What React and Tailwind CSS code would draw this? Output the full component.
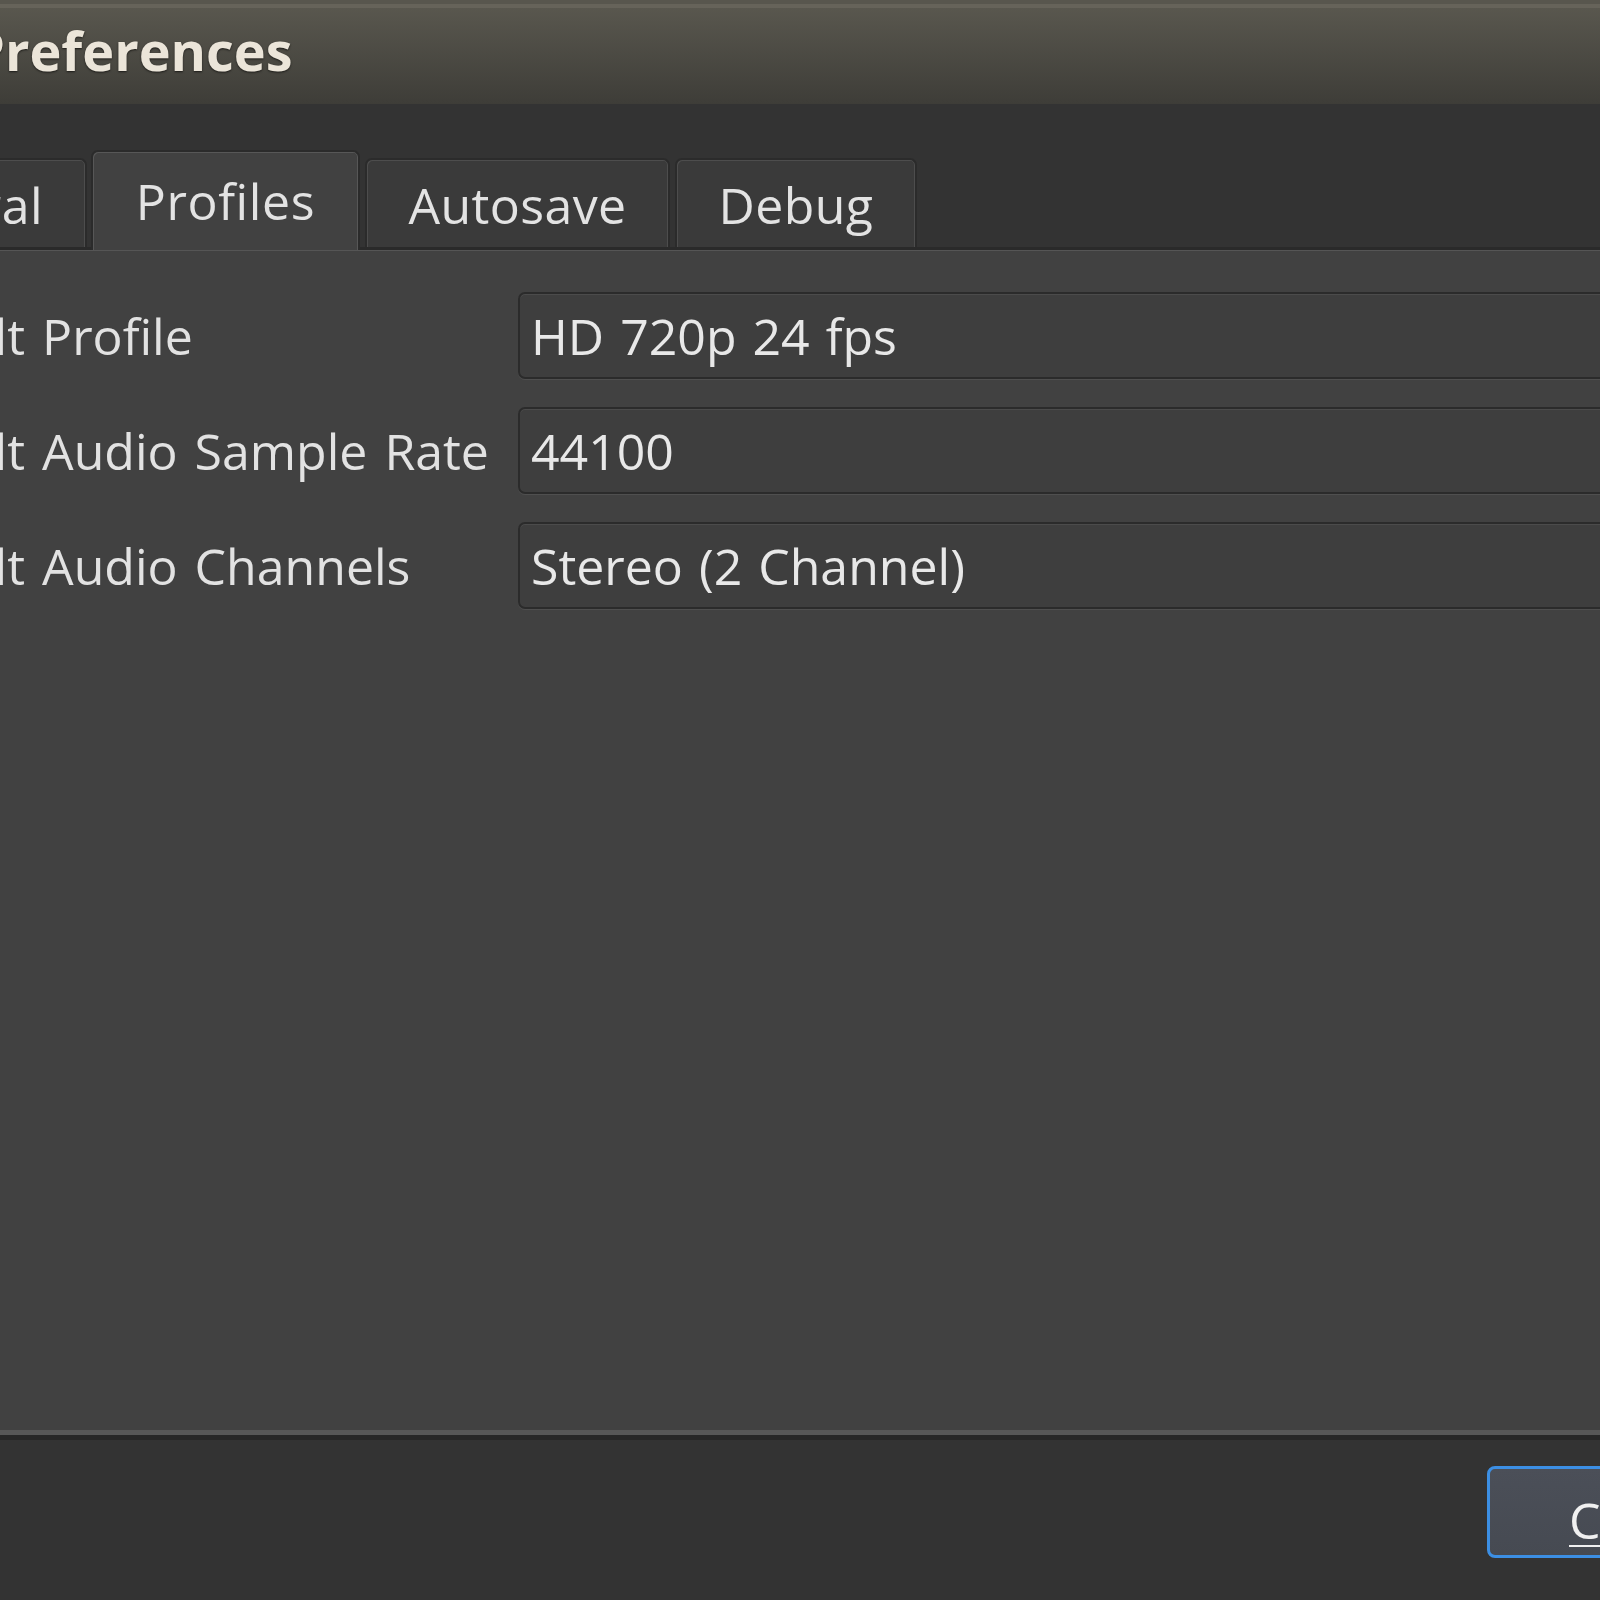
import React from "react";

const tabs = [
  { label: "General", w: "w-[275px]" },
  { label: "Profiles", w: "w-[269px]", active: true },
  { label: "Autosave", w: "w-[305px]" },
  { label: "Debug", w: "w-[242px]" },
];

const rows = [
  { label: "Default Profile", value: "HD 720p 24 fps" },
  { label: "Default Audio Sample Rate", value: "44100" },
  { label: "Default Audio Channels", value: "Stereo (2 Channel)" },
];

const App = () => {
  return (
    <div className="w-[1600px] h-[1600px] overflow-hidden bg-[#333333] font-['Open_Sans',sans-serif] text-[50px] leading-[60px] text-[#e3e3e3]">
      {/* dialog, shifted so its left part is off screen */}
      <div className="ml-[-190px] w-[2100px] flex flex-col">
        {/* Title bar */}
        <div className="h-[104px] bg-[linear-gradient(to_bottom,#5b5950,#3e3d38)] shadow-[inset_0_4px_0_#58564e,inset_0_8px_0_#66635a] pt-[20px] pl-[161px]">
          <span className="font-bold text-[54px] text-[#ebe5d9] [text-shadow:0_1px_2px_#1c1b18]">
            Preferences
          </span>
        </div>

        {/* Tabs */}
        <div className="mt-[46px] pl-[2px] flex items-end gap-[4px]">
          {tabs.map((t, i) =>
            t.active ? (
              <div
                key={t.label}
                className={`${t.w} relative z-10 h-[100px] mb-[-3px] bg-[#414141] border-2 border-b-0 border-[#2b2b2b] rounded-t-[7px] shadow-[inset_1px_1px_0_#575757,inset_-1px_0_0_#575757] flex justify-center pt-[19px] tracking-[0.6px] font-[500]`}
              >
                {t.label}
              </div>
            ) : (
              <div
                key={t.label}
                className={`${t.w} ${i > 1 ? "ml-[1px]" : ""} h-[89px] bg-[#3a3a3a] border-2 border-b-0 border-[#2b2b2b] rounded-t-[7px] shadow-[inset_1px_1px_0_#4d4d4d,inset_-1px_0_0_#4d4d4d] flex justify-center pt-[15px] tracking-[0.4px] font-[500]`}
              >
                {t.label}
              </div>
            )
          )}
        </div>

        {/* Panel */}
        <div className="h-[1193px] bg-[#414141] border-t-[3px] border-b-[5px] border-t-[#2a2a2a] border-b-[#272727] shadow-[inset_0_1px_0_#555555,inset_0_-5px_0_#575757] pt-[42px] pl-[45px] flex flex-col gap-[28px]">
          {rows.map((r) => (
            <div key={r.label} className="h-[87px] flex items-center">
              <div className="w-[663px] shrink-0 whitespace-nowrap text-[#e2e2e2] font-[500] [word-spacing:4px]">{r.label}</div>
              <div className="flex-1 h-[87px] flex items-center pl-[11px] bg-[#3e3e3e] border-2 border-[#2b2b2b] rounded-[7px] shadow-[inset_0_1px_0_#4b4b4b,0_1px_0_#4f4f4f] text-[#e8e8e8] whitespace-nowrap font-[500] [word-spacing:3px]">
                {r.value}
              </div>
            </div>
          ))}
        </div>

        {/* Button row */}
        <div className="h-[160px] pt-[26px] pl-[1677px]">
          <button className="w-[330px] h-[92px] bg-[linear-gradient(to_bottom,#4b4f58,#464a52)] border-[3px] border-[#3c8fe4] rounded-[8px] pl-[79px] pt-[21px] flex items-start text-[#f0f0f0] font-[500]">
            <span className="underline decoration-2 underline-offset-[6px]">C</span>ancel
          </button>
        </div>
      </div>
    </div>
  );
};

export default App;
